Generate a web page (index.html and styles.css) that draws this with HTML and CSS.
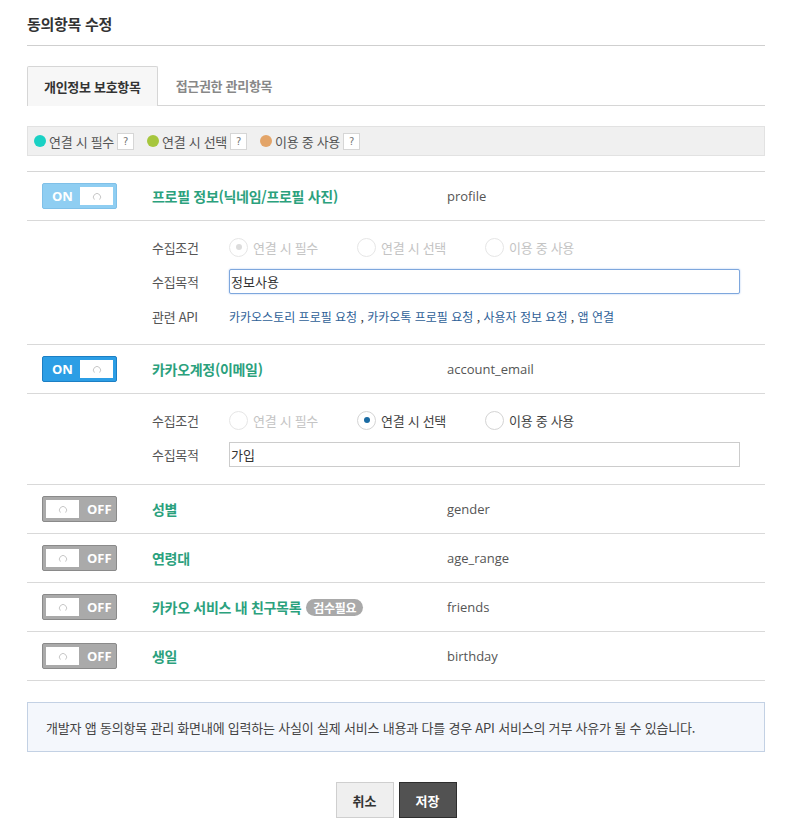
FILE: index.html
```html
<!DOCTYPE html>
<html lang="ko">
<head>
<meta charset="utf-8">
<title>동의항목 수정</title>
<link rel="stylesheet" href="styles.css">
</head>
<body>
<div class="page">
  <h1 class="page-title">동의항목 수정</h1>

  <div class="tabs">
    <div class="tab tab-active">개인정보 보호항목</div>
    <div class="tab">접근권한 관리항목</div>
  </div>

  <div class="legend">
    <span class="legend-item"><span class="dot dot-teal"></span>연결 시 필수<span class="qbox">?</span></span>
    <span class="legend-item"><span class="dot dot-green"></span>연결 시 선택<span class="qbox">?</span></span>
    <span class="legend-item"><span class="dot dot-orange"></span>이용 중 사용<span class="qbox">?</span></span>
  </div>

  <div class="list">
    <div class="row">
      <div class="toggle toggle-on toggle-disabled"><span class="tg-label">ON</span><span class="knob"><svg width="10" height="10" viewBox="0 0 10 10"><path d="M2.4 7.6 A3.6 3.6 0 1 1 7.6 7.6" fill="none" stroke="#c8c8c8" stroke-width="1"/></svg></span></div>
      <div class="row-title">프로필 정보(닉네임/프로필 사진)</div>
      <div class="row-code">profile</div>
    </div>
    <div class="detail">
      <div class="detail-line">
        <span class="d-label">수집조건</span>
        <div class="radios">
          <span class="radio radio-disabled"><span class="circle checked-light"></span>연결 시 필수</span>
          <span class="radio radio-disabled"><span class="circle"></span>연결 시 선택</span>
          <span class="radio radio-disabled"><span class="circle"></span>이용 중 사용</span>
        </div>
      </div>
      <div class="detail-line">
        <span class="d-label">수집목적</span>
        <input class="text-input focused" type="text" value="정보사용">
      </div>
      <div class="detail-line">
        <span class="d-label">관련 API</span>
        <span class="apis"><a>카카오스토리 프로필 요청</a> , <a>카카오톡 프로필 요청</a> , <a>사용자 정보 요청</a> , <a>앱 연결</a></span>
      </div>
    </div>

    <div class="row">
      <div class="toggle toggle-on"><span class="tg-label">ON</span><span class="knob"><svg width="10" height="10" viewBox="0 0 10 10"><path d="M2.4 7.6 A3.6 3.6 0 1 1 7.6 7.6" fill="none" stroke="#c8c8c8" stroke-width="1"/></svg></span></div>
      <div class="row-title">카카오계정(이메일)</div>
      <div class="row-code">account_email</div>
    </div>
    <div class="detail detail-short">
      <div class="detail-line">
        <span class="d-label">수집조건</span>
        <div class="radios">
          <span class="radio radio-disabled"><span class="circle"></span>연결 시 필수</span>
          <span class="radio"><span class="circle checked"></span>연결 시 선택</span>
          <span class="radio"><span class="circle"></span>이용 중 사용</span>
        </div>
      </div>
      <div class="detail-line">
        <span class="d-label">수집목적</span>
        <input class="text-input" type="text" value="가입">
      </div>
    </div>

    <div class="row">
      <div class="toggle toggle-off"><span class="knob"><svg width="10" height="10" viewBox="0 0 10 10"><path d="M2.4 7.6 A3.6 3.6 0 1 1 7.6 7.6" fill="none" stroke="#c8c8c8" stroke-width="1"/></svg></span><span class="tg-label">OFF</span></div>
      <div class="row-title">성별</div>
      <div class="row-code">gender</div>
    </div>
    <div class="row">
      <div class="toggle toggle-off"><span class="knob"><svg width="10" height="10" viewBox="0 0 10 10"><path d="M2.4 7.6 A3.6 3.6 0 1 1 7.6 7.6" fill="none" stroke="#c8c8c8" stroke-width="1"/></svg></span><span class="tg-label">OFF</span></div>
      <div class="row-title">연령대</div>
      <div class="row-code">age_range</div>
    </div>
    <div class="row">
      <div class="toggle toggle-off"><span class="knob"><svg width="10" height="10" viewBox="0 0 10 10"><path d="M2.4 7.6 A3.6 3.6 0 1 1 7.6 7.6" fill="none" stroke="#c8c8c8" stroke-width="1"/></svg></span><span class="tg-label">OFF</span></div>
      <div class="row-title">카카오 서비스 내 친구목록 <span class="badge">검수필요</span></div>
      <div class="row-code">friends</div>
    </div>
    <div class="row">
      <div class="toggle toggle-off"><span class="knob"><svg width="10" height="10" viewBox="0 0 10 10"><path d="M2.4 7.6 A3.6 3.6 0 1 1 7.6 7.6" fill="none" stroke="#c8c8c8" stroke-width="1"/></svg></span><span class="tg-label">OFF</span></div>
      <div class="row-title">생일</div>
      <div class="row-code">birthday</div>
    </div>
  </div>

  <div class="notice">개발자 앱 동의항목 관리 화면내에 입력하는 사실이 실제 서비스 내용과 다를 경우 API 서비스의 거부 사유가 될 수 있습니다.</div>

  <div class="actions">
    <button class="btn btn-cancel" type="button">취소</button>
    <button class="btn btn-save" type="button">저장</button>
  </div>
</div>
</body>
</html>
```

FILE: styles.css
```css
* { box-sizing: border-box; }
html, body { margin: 0; padding: 0; background: #fff; }
body {
  font-family: "Noto Sans CJK KR", "Noto Sans", sans-serif;
  color: #333;
  font-size: 13px;
}
.page {
  width: 738px;
  margin-left: 27px;
}
.page-title {
  margin: 0;
  height: 46px;
  padding-top: 13px;
  font-size: 15px;
  line-height: 22px;
  font-weight: 700;
  color: #333;
  border-bottom: 1px solid #cfcfcf;
  letter-spacing: -0.3px;
}
.tabs {
  display: flex;
  margin-top: 20px;
  height: 40px;
  border-bottom: 1px solid #d6d6d6;
}
.tab {
  height: 40px;
  padding: 0 16px;
  font-size: 13px;
  line-height: 39px;
  font-weight: 700;
  color: #888;
  letter-spacing: -0.3px;
  white-space: nowrap;
}
.tab-active {
  min-width: 130px;
  color: #333;
  background: #f7f7f7;
  border: 1px solid #d6d6d6;
  border-bottom: none;
  border-radius: 2px 2px 0 0;
}
.tab + .tab { padding-left: 18px; }
.legend {
  margin-top: 20px;
  height: 30px;
  background: #f0f0f0;
  border: 1px solid #e2e2e2;
  display: flex;
  align-items: center;
  padding-left: 6px;
  gap: 13px;
}
.legend-item {
  display: flex;
  align-items: center;
  font-size: 13px;
  color: #555;
  letter-spacing: -0.3px;
}
.dot {
  width: 12px;
  height: 12px;
  border-radius: 50%;
  margin-right: 3px;
}
.dot-teal { background: #1ad1c4; }
.dot-green { background: #a6c63d; }
.dot-orange { background: #e3a468; }
.qbox {
  display: inline-flex;
  align-items: center;
  justify-content: center;
  width: 17px;
  height: 17px;
  margin-left: 3px;
  background: #fff;
  border: 1px solid #d6d6d6;
  font-size: 10px;
  color: #777;
  font-family: "DejaVu Sans", sans-serif;
}
.list {
  margin-top: 15px;
  border-top: 1px solid #d6d6d6;
}
.row {
  display: flex;
  align-items: center;
  height: 49px;
  border-bottom: 1px solid #d9d9d9;
  padding-left: 15px;
}
.toggle {
  display: flex;
  align-items: center;
  width: 75px;
  height: 26px;
  padding: 3px;
  border: 1px solid #888;
  border-radius: 2px;
  flex: none;
}
.toggle-on { background: #2c9ee5; border-color: #1c7fc4; }
.toggle-disabled { background: #8fcef2; border-color: #7fc0e8; }
.toggle-off { background: #aaa; border-color: #8a8a8a; }
.tg-label {
  flex: 1;
  color: #fff;
  font-family: "Open Sans", "Noto Sans", sans-serif;
  font-weight: 700;
  font-size: 13px;
  line-height: 18px;
}
.toggle-on .tg-label { padding-left: 6px; }
.toggle-off .tg-label { padding-left: 8px; }
.knob {
  width: 33px;
  height: 18px;
  background: #fff;
  display: flex;
  align-items: center;
  justify-content: center;
  flex: none;
}
.knob svg { display: block; margin-top: 1px; }
.row-title {
  width: 295px;
  margin-left: 35px;
  font-weight: 700;
  color: #2ba17d;
  font-size: 14px;
  letter-spacing: -0.3px;
  display: flex;
  align-items: center;
  white-space: nowrap;
}
.badge {
  display: inline-block;
  margin-left: 5px;
  height: 17px;
  line-height: 17px;
  padding: 0 7px;
  background: #a9a9a9;
  color: #fff;
  font-size: 12px;
  font-weight: 700;
  border-radius: 9px;
  letter-spacing: -0.3px;
}
.row-code {
  font-family: "Open Sans", "Noto Sans", sans-serif;
  color: #555;
  font-size: 13px;
}
.detail {
  border-bottom: 1px solid #d9d9d9;
  padding: 14px 0 16px 125px;
  display: flex;
  flex-direction: column;
  gap: 10px;
}
.detail-short { padding-top: 14px; padding-bottom: 17px; }
.detail-line {
  display: flex;
  align-items: center;
  min-height: 24px;
}
.d-label {
  width: 77px;
  flex: none;
  font-size: 13px;
  color: #555;
  letter-spacing: -0.3px;
}
.radios { display: flex; }
.radio {
  display: flex;
  align-items: center;
  width: 128px;
  font-size: 13px;
  color: #444;
  letter-spacing: -0.3px;
}
.radio-disabled { color: #c4c4c4; }
.circle {
  width: 19px;
  height: 19px;
  border-radius: 50%;
  border: 1px solid #d4d4d4;
  background: #fff;
  margin-right: 5px;
  display: flex;
  align-items: center;
  justify-content: center;
  flex: none;
}
.radio-disabled .circle { border-color: #e6e6e6; }
.circle.checked::after {
  content: "";
  width: 6px;
  height: 6px;
  border-radius: 50%;
  background: #1a6ba3;
}
.circle.checked-light::after {
  content: "";
  width: 6px;
  height: 6px;
  border-radius: 50%;
  background: #dcdcdc;
}
.text-input {
  width: 511px;
  height: 25px;
  border: 1px solid #cccccc;
  padding: 0 1px;
  font-family: "Noto Sans CJK KR", sans-serif;
  font-size: 13px;
  color: #333;
  outline: none;
  border-radius: 0;
}
.text-input.focused {
  border-color: #7ea7dd;
  box-shadow: 0 0 2px #a9c6ee;
  border-radius: 2px;
}
.apis {
  font-size: 12px;
  color: #333;
}
.apis a { color: #2e5f97; }
.notice {
  margin-top: 21px;
  height: 50px;
  background: #f4f7fc;
  border: 1px solid #c3d1e4;
  padding-left: 18px;
  display: flex;
  align-items: center;
  font-size: 13px;
  color: #444;
  letter-spacing: -0.2px;
  white-space: nowrap;
}
.actions {
  margin-top: 30px;
  display: flex;
  justify-content: center;
  gap: 5px;
}
.btn {
  width: 58px;
  height: 36px;
  font-family: "Noto Sans CJK KR", sans-serif;
  font-size: 13px;
  font-weight: 700;
  border-radius: 0;
  cursor: pointer;
}
.btn-cancel { background: #efefef; border: 1px solid #cfcfcf; color: #333; }
.btn-save { background: #525252; border: 1px solid #2e2e2e; color: #fff; }
```
